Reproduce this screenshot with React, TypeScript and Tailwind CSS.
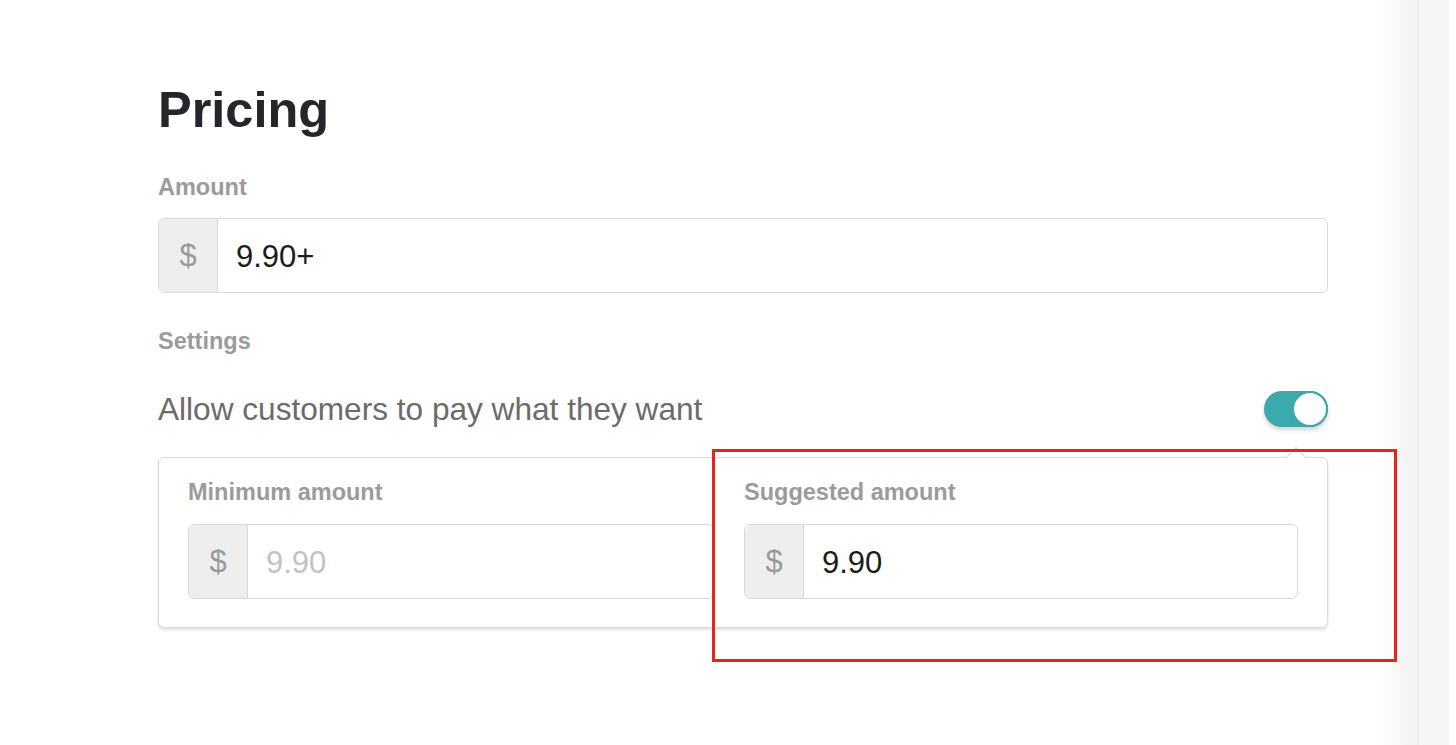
import React from "react";

const font = { fontFamily: '"Liberation Sans", Arial, Helvetica, sans-serif' };

function MoneyInput({ value, placeholder }: { value?: string; placeholder?: string }) {
  return (
    <div className="flex h-[75px] w-full overflow-hidden rounded-[6px] border border-[#d9d9d9] bg-white">
      <div className="flex w-[59px] shrink-0 items-center justify-center border-r border-[#d9d9d9] bg-[#eeeeee] pt-[2px] text-[31px] text-[#9a9a9a]">
        $
      </div>
      <div className="flex flex-1 items-center pl-[18px] pt-[3px] text-[31px]">
        {value ? (
          <span className="text-[#1c1c1c]">{value}</span>
        ) : (
          <span className="text-[#c2c2c2]">{placeholder}</span>
        )}
      </div>
    </div>
  );
}

function Label({ children }: { children: React.ReactNode }) {
  return <div className="text-[23.5px] font-bold leading-[23px] text-[#9b9b9b]">{children}</div>;
}

export default function App() {
  return (
    <div className="relative flex h-[745px] w-[1456px] overflow-hidden bg-white" style={font}>
      <main className="flex-1 pl-[158px] pt-[85px]">
        <div className="w-[1170px]">
          <h1 className="text-[50.5px] font-bold leading-[50px] text-[#23272b]">Pricing</h1>
          <div className="mt-[41px]">
            <Label>Amount</Label>
          </div>
          <div className="mt-[19px]">
            <MoneyInput value="9.90+" />
          </div>
          <div className="mt-[37px]">
            <Label>Settings</Label>
          </div>
          <div className="mt-[38px] flex h-[36px] items-center justify-between">
            <span className="pt-[2px] text-[31.6px] text-[#6b6b6b]">Allow customers to pay what they want</span>
            <div className="relative flex h-[36px] w-[64px] items-center justify-end rounded-full bg-[#3ca9ac] shadow-[0_3px_4px_rgba(0,0,0,0.18)]">
              <div className="h-[36px] w-[36px] rounded-full border-[2px] border-[#3ca9ac] bg-white" />
            </div>
          </div>
          <div className="relative mt-[30px] rounded-[6px] border border-[#d9d9d9] bg-white px-[29px] pb-[28px] pt-[23px] shadow-[0_2px_3px_rgba(0,0,0,0.12)]">
            <div className="absolute -top-[8px] right-[24px] h-[14px] w-[14px] rotate-45 border-l border-t border-[#d9d9d9] bg-white" />
            <div className="flex gap-[30px]">
              <div className="w-[526px]">
                <Label>Minimum amount</Label>
                <div className="mt-[20px]">
                  <MoneyInput placeholder="9.90" />
                </div>
              </div>
              <div className="flex-1">
                <Label>Suggested amount</Label>
                <div className="mt-[20px]">
                  <MoneyInput value="9.90" />
                </div>
              </div>
            </div>
          </div>
        </div>
      </main>
      <div className="w-[38px] bg-gradient-to-r from-white to-[#f0f0f0]" />
      <div className="w-[31px] border-l border-[#e9e9e9] bg-[#f5f5f5]" />
      <div className="w-[7px] bg-white" />
      <div className="pointer-events-none absolute left-[712px] top-[449px] h-[213px] w-[685px] border-[3px] border-[#e8221c]" />
    </div>
  );
}
